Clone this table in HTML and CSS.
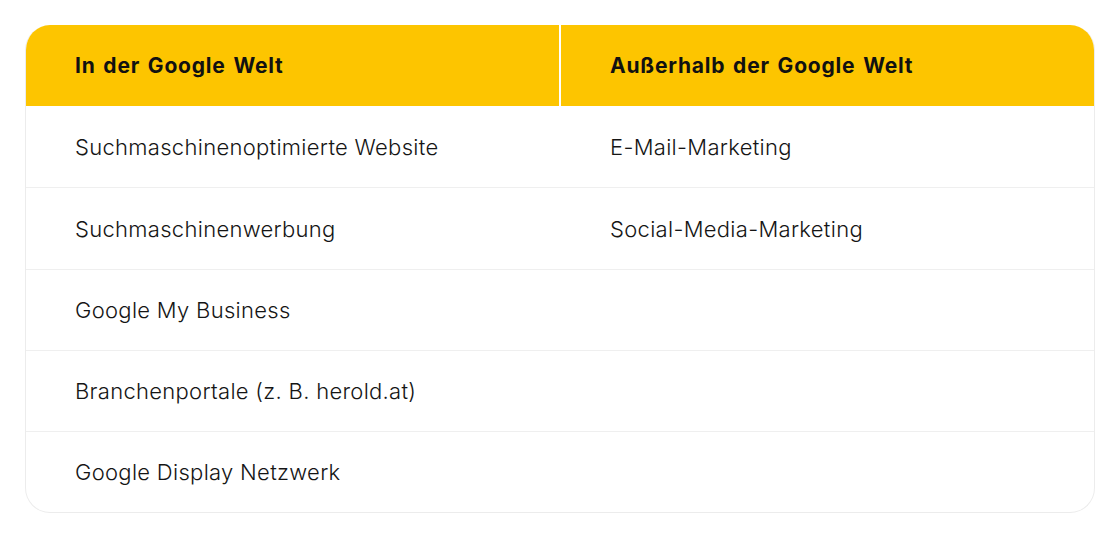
FILE: index.html
```html
<!DOCTYPE html>
<html lang="de">
<head>
<meta charset="utf-8">
<link rel="stylesheet" href="styles.css">
</head>
<body>
<div class="table">
  <div class="head">
    <div class="hcell">In der Google Welt</div>
    <div class="hcell hcell-right">Außerhalb der Google Welt</div>
  </div>
  <div class="row tall"><div class="cell">Suchmaschinenoptimierte Website</div><div class="cell">E-Mail-Marketing</div></div>
  <div class="row tall"><div class="cell">Suchmaschinenwerbung</div><div class="cell">Social-Media-Marketing</div></div>
  <div class="row"><div class="cell">Google My Business</div><div class="cell"></div></div>
  <div class="row"><div class="cell">Branchenportale (z. B. herold.at)</div><div class="cell"></div></div>
  <div class="row last"><div class="cell">Google Display Netzwerk</div><div class="cell"></div></div>
</div>
</body>
</html>
```

FILE: styles.css
```css
html, body { margin: 0; padding: 0; background: #fff; }
body { padding: 25px 0 0 25px; font-family: "Inter", "Liberation Sans", sans-serif; color: #151515; }
.table {
  width: 1070px;
  border: 1px solid #ececec;
  border-top: none;
  border-radius: 25px;
  overflow: hidden;
  box-sizing: border-box;
}
.head {
  display: grid;
  grid-template-columns: 534px 1fr;
  column-gap: 2px;
  background: #fff;
  margin: 0 -1px;
}
.hcell {
  background: #fdc500;
  height: 81px;
  display: flex;
  align-items: center;
  padding-left: 50px;
  font-weight: 700;
  font-size: 21px;
  color: #111;
  letter-spacing: 0.8px;
  word-spacing: 2px;
}
.hcell-right { padding-left: 49px; }
.row {
  display: grid;
  grid-template-columns: 535px 1fr;
  height: 80px;
  border-bottom: 1px solid #efefef;
}
.row.tall { height: 81px; }
.row.last { border-bottom: none; }
.cell {
  display: flex;
  align-items: center;
  padding-left: 49px;
  font-size: 22px;
  font-weight: 300;
  letter-spacing: 0.3px;
}
```
